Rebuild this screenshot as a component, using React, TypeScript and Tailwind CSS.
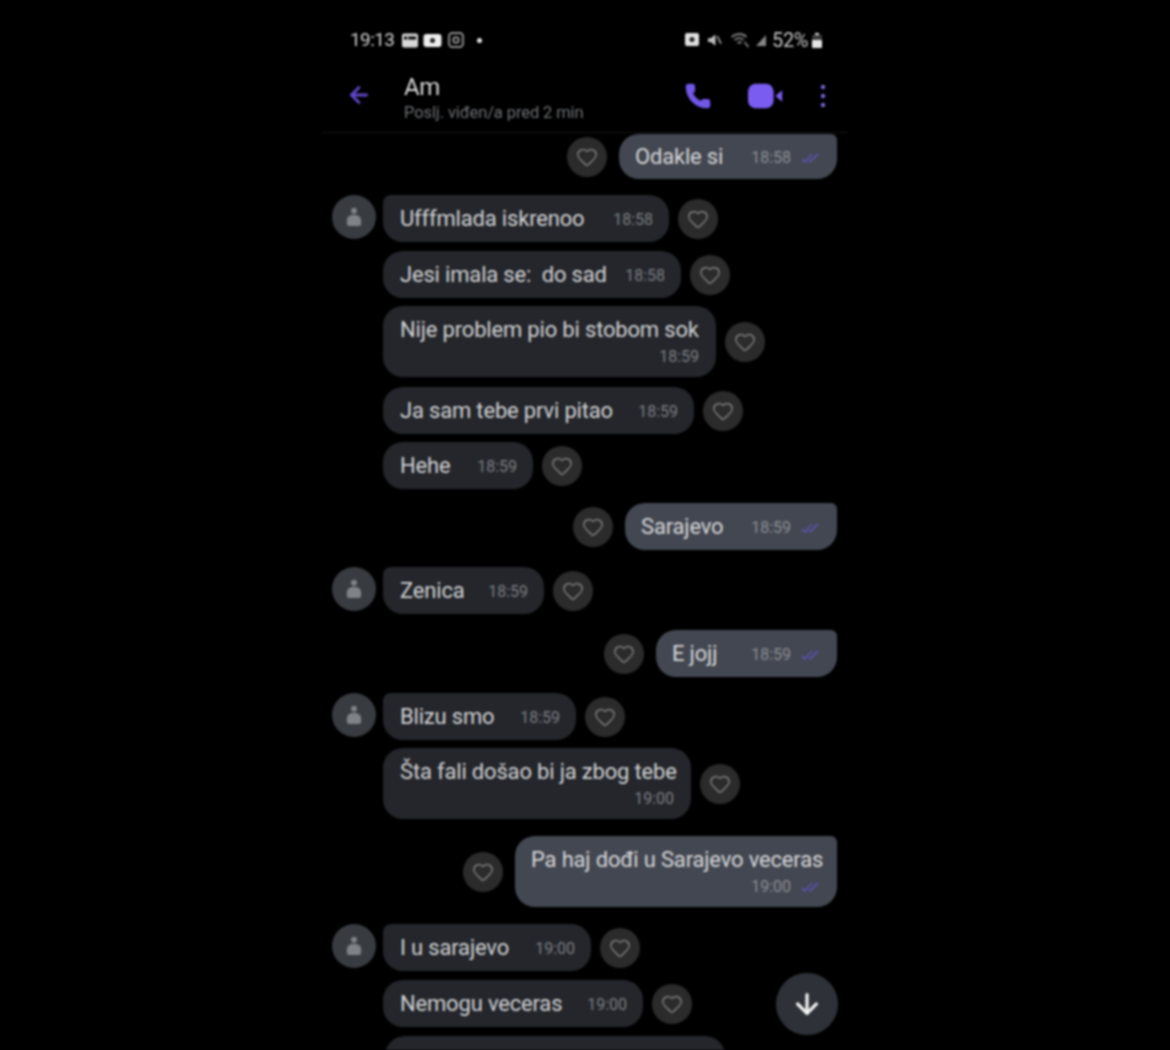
import React from "react";
import { ArrowLeft, ArrowDown, Heart, Phone } from "lucide-react";

function Checks() {
  return (
    <svg width="20" height="12" viewBox="0 0 20 12" className="ml-[10px]" fill="none" stroke="#5a52a8" strokeWidth="1.8">
      <path d="M1 7l3 3 7-8" />
      <path d="M8 9l1 1 8-8" />
    </svg>
  );
}

function HeartBtn() {
  return (
    <div className="flex h-10 w-10 shrink-0 items-center justify-center rounded-full bg-[#2b2b2b]">
      <Heart size={22} strokeWidth={1.6} color="#7c7c7c" />
    </div>
  );
}

function Avatar() {
  return (
    <div className="flex h-11 w-11 items-center justify-center rounded-full bg-[#383b40]">
      <svg width="16" height="24" viewBox="0 0 18 24" fill="#7f8287">
        <circle cx="9" cy="5" r="3.4" />
        <path d="M3 22a2 2 0 0 1-2-2v-4c0-4 3-6.5 8-6.5s8 2.500 8 6.500v4a2 2 0 0 1-2 2z" />
      </svg>
    </div>
  );
}

function InMsg({
  text, time, w, mt, avatar, two, first,
}: { text: string; time: string; w: string; mt: string; avatar?: boolean; two?: boolean; first?: boolean }) {
  return (
    <div className={"flex items-start " + mt}>
      <div className="w-[61px] shrink-0 pl-[10px]">{avatar && <Avatar />}</div>
      <div className="flex items-center gap-[9px]">
        {two ? (
          <div className={"flex h-[71px] flex-col rounded-[20px] bg-[#24262b] pl-[17px] pr-[17px] pt-[10px] " + w}>
            <span className="whitespace-nowrap text-[22px] leading-[28px] tracking-[-0.18px] text-[#d2d3d5]">{text}</span>
            <span className="self-end text-[16px] leading-[26px] text-[#7c7e83]">{time}</span>
          </div>
        ) : (
          <div className={"flex h-[47px] items-center justify-between bg-[#24262b] pl-[17px] pr-[16px] " + (first ? "rounded-[20px] rounded-tl-[8px] " : "rounded-[20px] ") + w}>
            <span className="whitespace-pre text-[22px] leading-[28px] tracking-[-0.18px] text-[#d2d3d5]">{text}</span>
            <span className="pt-[2px] text-[16px] text-[#7c7e83]">{time}</span>
          </div>
        )}
        <HeartBtn />
      </div>
    </div>
  );
}

function OutMsg({
  text, time, w, mt, two, h,
}: { text: string; time: string; w: string; mt: string; two?: boolean; h?: string }) {
  return (
    <div className={"flex items-center justify-end gap-[12px] pr-[11px] " + mt}>
      <HeartBtn />
      {two ? (
        <div className={"flex h-[71px] flex-col rounded-[20px] rounded-tr-[6px] bg-[#434751] pl-[16px] pr-[16px] pt-[10px] " + w}>
          <span className="whitespace-nowrap text-[22px] leading-[28px] tracking-[-0.18px] text-[#d6d7da]">{text}</span>
          <span className="flex items-center justify-end text-[16px] leading-[26px] text-[#8b8e95]">{time}<Checks /></span>
        </div>
      ) : (
        <div className={"flex items-center justify-between rounded-[20px] rounded-tr-[6px] bg-[#434751] pl-[16px] pr-[16px] " + (h ?? "h-[47px]") + " " + w}>
          <span className="whitespace-nowrap text-[22px] leading-[28px] tracking-[-0.18px] text-[#d6d7da]">{text}</span>
          <span className="flex items-center pt-[2px] text-[16px] text-[#8b8e95]">{time}<Checks /></span>
        </div>
      )}
    </div>
  );
}

function StatusBar() {
  return (
    <div className="flex h-[80px] items-center justify-between pl-[28px] pr-[26px] text-[#d0d0d0]">
      <div className="flex items-center">
        <span className="mr-[8px] text-[19px] tracking-[-0.6px]">19:13</span>
        <svg width="16" height="15" viewBox="0 0 16 14" fill="#d8d8d8" className="mr-[5px]">
          <path d="M2 0h12a2 2 0 0 1 2 2v10a2 2 0 0 1-2 2H2a2 2 0 0 1-2-2V2a2 2 0 0 1 2-2zm0 3v3h12V3zm3 0a1.5 1.5 0 1 1 0 3z" fillRule="evenodd" />
        </svg>
        <svg width="19" height="13" viewBox="0 0 18 13" className="mr-[6px]">
          <rect width="18" height="13" rx="3" fill="#eeeeee" />
          <circle cx="9" cy="6.500" r="2.500" fill="#222" />
        </svg>
        <svg width="16" height="16" viewBox="0 0 15 15" fill="none" stroke="#8e8e8e" strokeWidth="1.8">
          <rect x="1" y="1" width="13" height="13" rx="3" />
          <circle cx="7.5" cy="7.5" r="2.6" />
        </svg>
        <span className="ml-[13px] h-[5px] w-[5px] rounded-full bg-[#e5e5e5]" />
      </div>
      <div className="flex items-center">
        <svg width="14" height="14" viewBox="0 0 14 14" className="mr-[8px]">
          <rect width="14" height="13" rx="2" fill="#e0e0e0" />
          <circle cx="7" cy="6.5" r="2.5" fill="#222" />
        </svg>
        <svg width="15" height="14" viewBox="0 0 16 14" fill="#c0c0c0" className="mr-[8px]">
          <path d="M1 5h3l5-4v12L4 9H1z" />
          <path d="M11 3l4 8" stroke="#c0c0c0" strokeWidth="1.5" />
        </svg>
        <svg width="21" height="15" viewBox="0 0 20 15" fill="none" stroke="#7c7c7c" strokeWidth="1.9" className="mr-[4px]">
          <path d="M1 4c5-4 11-4 15 0M4 7c3-2.5 7-2.5 9 0M7 10c1.500-1 3-1 4 0M14 9l4 5" />
        </svg>
        <svg width="12" height="13" viewBox="0 0 12 13" fill="#858585" className="mr-[5px]">
          <path d="M11 1v11H1z" />
        </svg>
        <span className="text-[20px] tracking-[-0.4px] text-[#c4c4c4]">52%</span>
        <svg width="10" height="15" viewBox="0 0 10 15" className="ml-[4px]">
          <rect x="3" y="0" width="4" height="2" fill="#ddd" />
          <rect x="0" y="2" width="10" height="13" rx="1" fill="#3d3d3d" />
          <rect x="0" y="7" width="10" height="8" rx="1" fill="#e5e5e5" />
        </svg>
      </div>
    </div>
  );
}

function Header() {
  return (
    <div className="flex h-[53px] items-start border-b border-[#141414] pl-[24px] pr-[22px]">
      <ArrowLeft size={26} color="#5f46c8" strokeWidth={2.6} className="mt-[2px]" />
      <div className="ml-[32px] flex flex-col">
        <span className="mt-[-6px] text-[24px] leading-[26px] tracking-[-0.3px] text-[#d8d8d8]">Am</span>
        <span className="text-[16.500px] leading-[26px] tracking-[-0.1px] text-[#6e7074]">Poslj. viđen/a pred 2 min</span>
      </div>
      <div className="ml-auto mt-[2px] flex items-center">
        <Phone size={28} color="#7257e8" fill="#7257e8" strokeWidth={1} className="mr-[36px]" />
        <svg width="36" height="26" viewBox="0 0 38 26" className="mr-[36px]">
          <rect x="0" y="0" width="27" height="26" rx="8" fill="#7a5cf0" />
          <path d="M29 13l7-6v12z" fill="#7a5cf0" />
        </svg>
        <svg width="6" height="24" viewBox="0 0 6 24" fill="#7a62d8">
          <circle cx="3" cy="3" r="2.2" />
          <circle cx="3" cy="12" r="2.2" />
          <circle cx="3" cy="21" r="2.2" />
        </svg>
      </div>
    </div>
  );
}

export default function App() {
  return (
    <div className="flex h-[1050px] justify-center overflow-hidden bg-black font-['Roboto',sans-serif]">
      <div className="relative h-full w-[526px] overflow-hidden blur-[0.8px]">
        <StatusBar />
        <Header />
        <div className="flex flex-col">
          <OutMsg text="Odakle si" time="18:58" w="w-[218px]" mt="mt-[1px]" h="h-[45px]" />
          <InMsg text="Ufffmlada iskrenoo" time="18:58" w="w-[286px]" mt="mt-[16px]" avatar first />
          <InMsg text="Jesi imala se:  do sad" time="18:58" w="w-[298px]" mt="mt-[9px]" />
          <InMsg text="Nije problem pio bi stobom sok" time="18:59" w="w-[333px]" mt="mt-[8px]" two />
          <InMsg text="Ja sam tebe prvi pitao" time="18:59" w="w-[311px]" mt="mt-[10px]" />
          <InMsg text="Hehe" time="18:59" w="w-[150px]" mt="mt-[8px]" />
          <OutMsg text="Sarajevo" time="18:59" w="w-[212px]" mt="mt-[14px]" />
          <InMsg text="Zenica" time="18:59" w="w-[161px]" mt="mt-[17px]" avatar first />
          <OutMsg text="E jojj" time="18:59" w="w-[181px]" mt="mt-[16px]" />
          <InMsg text="Blizu smo" time="18:59" w="w-[193px]" mt="mt-[16px]" avatar first />
          <InMsg text="Šta fali došao bi ja zbog tebe" time="19:00" w="w-[308px]" mt="mt-[8px]" two />
          <OutMsg text="Pa haj dođi u Sarajevo veceras" time="19:00" w="w-[322px]" mt="mt-[17px]" two />
          <InMsg text="I u sarajevo" time="19:00" w="w-[208px]" mt="mt-[17px]" avatar first />
          <InMsg text="Nemogu veceras" time="19:00" w="w-[260px]" mt="mt-[9px]" />
          <div className="ml-[63px] mt-[9px] h-[40px] w-[340px] rounded-t-[20px] bg-[#24262b]" />
        </div>
        <div className="absolute left-[454px] top-[973px] flex h-[62px] w-[62px] items-center justify-center rounded-full bg-[#2e3238]">
          <ArrowDown size={32} color="#f2f2f2" strokeWidth={2.4} />
        </div>
      </div>
    </div>
  );
}
